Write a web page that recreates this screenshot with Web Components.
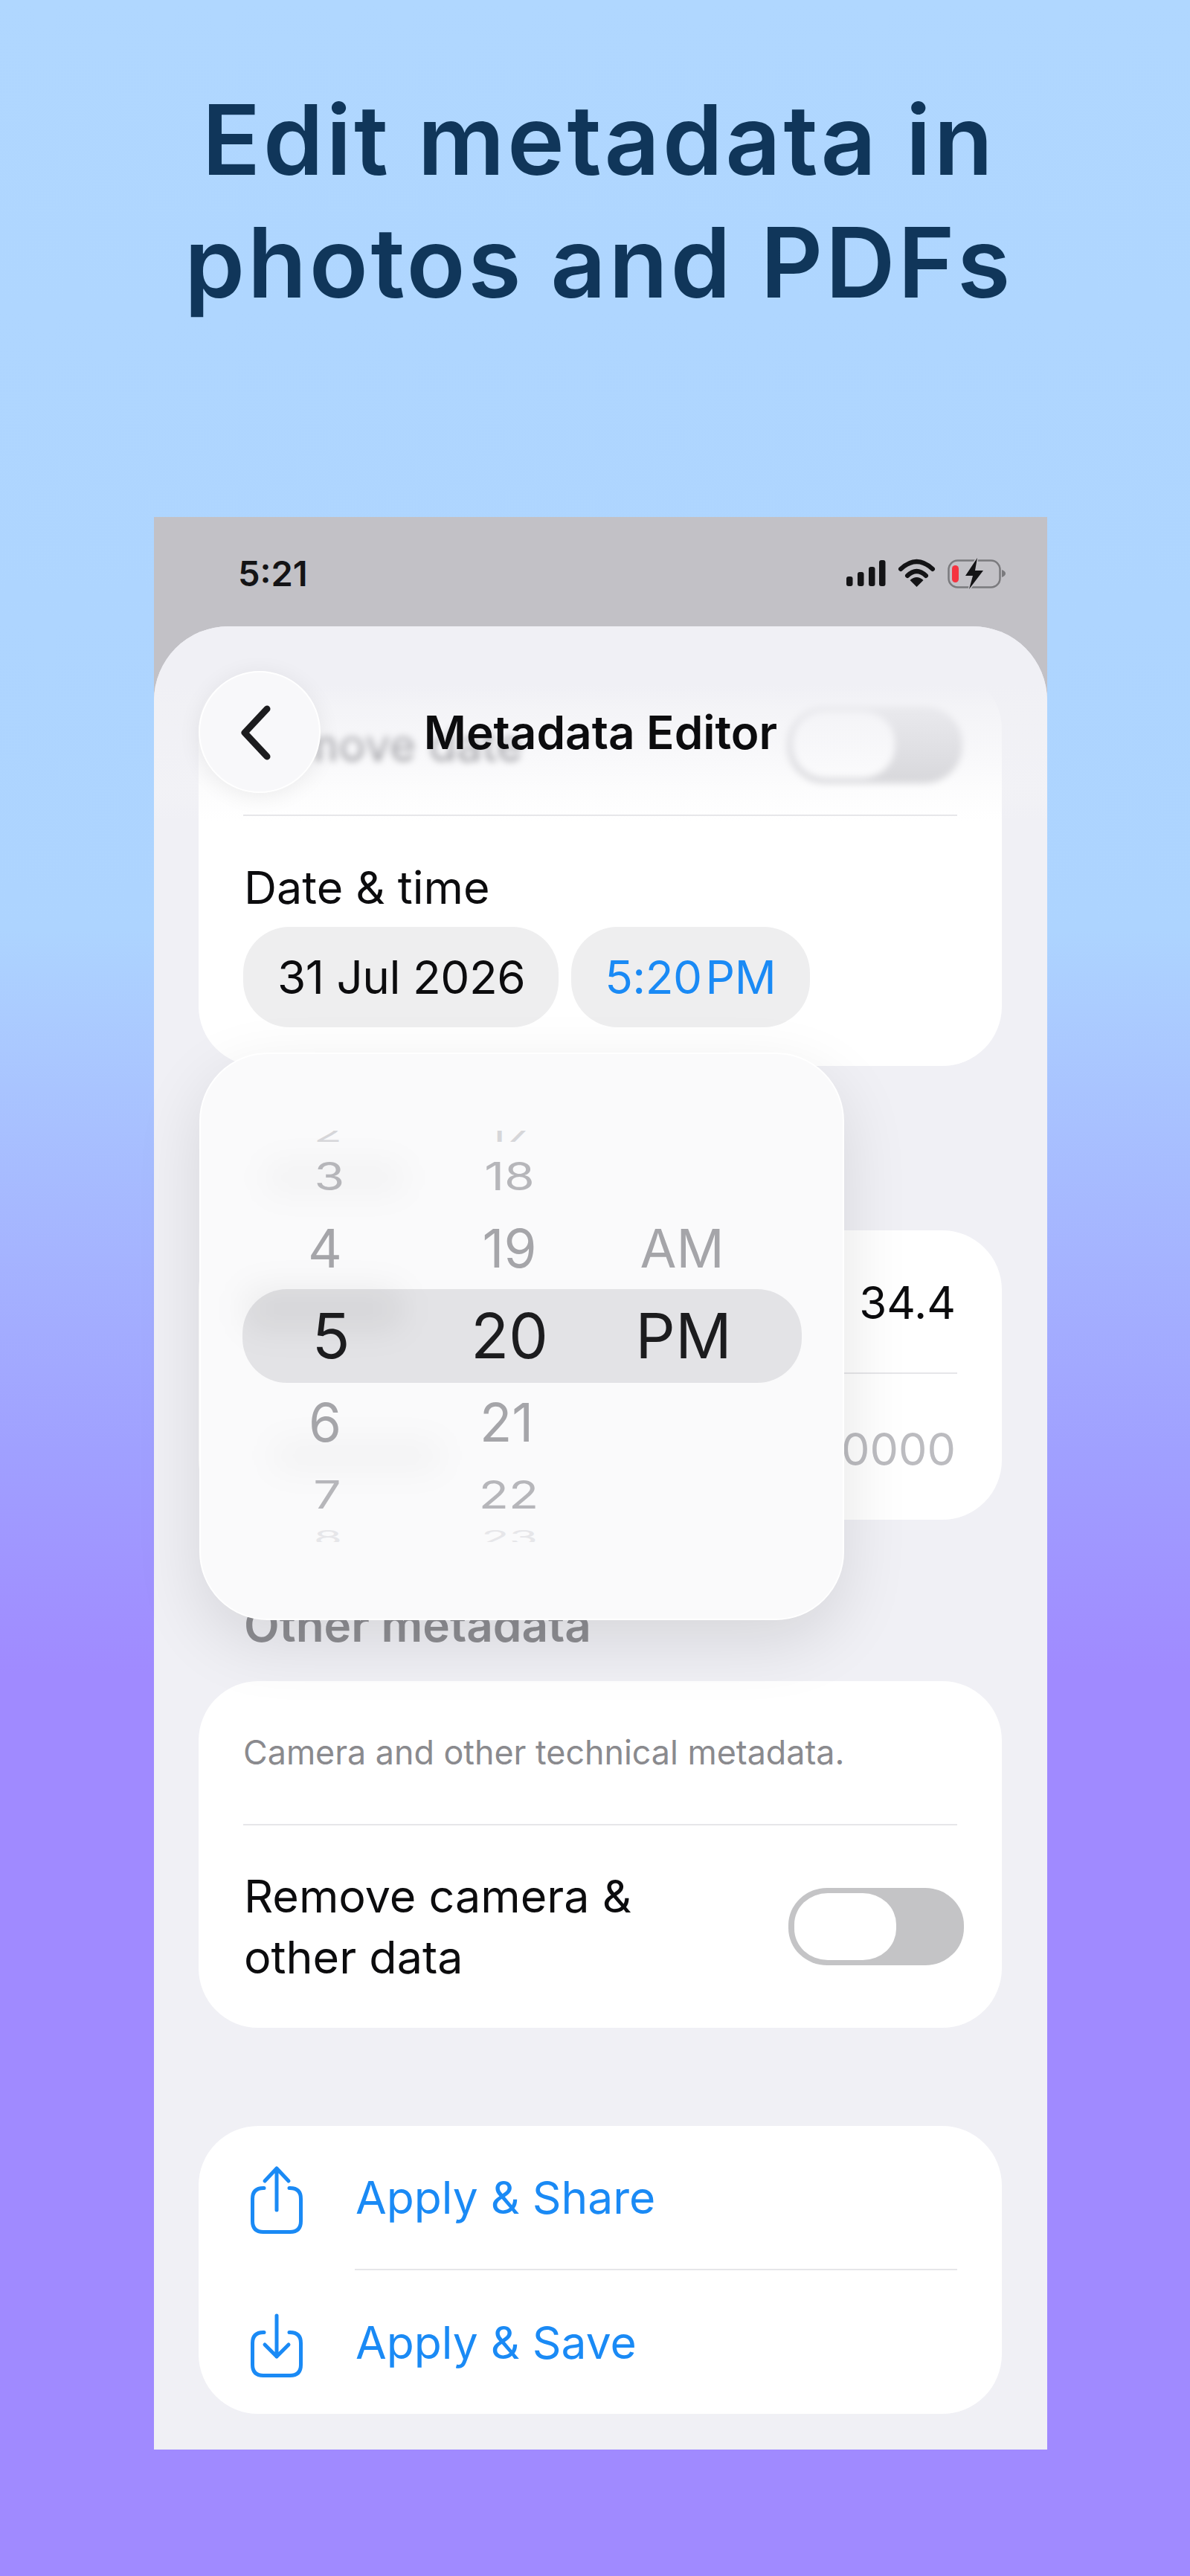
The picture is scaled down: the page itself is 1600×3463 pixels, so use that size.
<!DOCTYPE html>
<html>
<head>
<meta charset="utf-8">
<title>Metadata Editor</title>
<style>
  html, body { margin: 0; padding: 0; }
  body {
    width: 1600px; height: 3463px; overflow: hidden;
    font-family: Inter, "Noto Sans", sans-serif;
    background: linear-gradient(180deg, #b0d7ff 0, #add4ff 1250px, #a0a0ff 1950px, #a08aff 2250px, #a08aff 100%);
  }
</style>
</head>
<body>
<promo-headline>Edit metadata in<br>photos and PDFs</promo-headline>

<phone-shot>
  <status-strip slot="status" time="5:21"></status-strip>

  <settings-card style="--top:58px">
    <plain-row height="195" blurred>
      <span style="color:#44444a">Remove date</span>
      <toggle-switch slot="end" soft></toggle-switch>
    </plain-row>
    <card-line></card-line>
    <date-row label="Date &amp; time" date="31 Jul 2026" time="5:20 PM"></date-row>
  </settings-card>

  <settings-card style="--top:221px">
    <plain-row height="191" style="padding-top:2px;font-size:60px"><span slot="end">34.4</span></plain-row>
    <card-line></card-line>
    <plain-row height="196" style="padding-top:5px"><span slot="end" style="color:#bcbcc0">0000</span></plain-row>
  </settings-card>

  <section-title>Other metadata</section-title>

  <settings-card>
    <note-row>Camera and other technical metadata.</note-row>
    <card-line></card-line>
    <plain-row height="272" tight>
      <span>Remove camera &amp;<br>other data</span>
      <toggle-switch slot="end"></toggle-switch>
    </plain-row>
  </settings-card>

  <settings-card style="--top:132px">
    <action-row kind="share">Apply &amp; Share</action-row>
    <card-line inset="210"></card-line>
    <action-row kind="save" style="height:193px">Apply &amp; Save</action-row>
  </settings-card>

  <sheet-header slot="header">Metadata Editor</sheet-header>
  <wheel-picker slot="popup"></wheel-picker>
</phone-shot>

<script>
// small helper, every element is the same shape: static markup in an open shadow root
function shadow(el, html) {
  el.attachShadow({ mode: 'open' }).innerHTML = html;
}

class PromoHeadline extends HTMLElement {
  constructor() {
    super();
    shadow(this, `<style>
      :host { display: block; height: 695px; box-sizing: border-box; padding: 105px 0 0 10px; text-align: center;
        font-family: Inter, sans-serif; font-weight: 600; font-size: 130px; line-height: 165px; letter-spacing: 3.5px; color: #10365a; }
    </style><slot></slot>`);
  }
}

class PhoneShot extends HTMLElement {
  constructor() {
    super();
    shadow(this, `<style>
      :host { display: block; position: relative; width: 1201px; height: 2598px; margin-left: 207px; background: #c2c1c6; }
      .sheet { position: relative; height: 2451px; box-sizing: border-box; padding: 0 61px 48px 60px; background: #f0f0f5;
        border-radius: 100px 100px 0 0; overflow: hidden; }
    </style>
    <slot name="status"></slot>
    <div class="sheet"><slot></slot><slot name="header"></slot></div>
    <slot name="popup"></slot>`);
  }
}

class StatusStrip extends HTMLElement {
  constructor() {
    super();
    shadow(this, `<style>
      :host { display: flex; justify-content: space-between; height: 147px; box-sizing: border-box;
        padding: 48px 56px 0 113px; }
      .t { font-size: 47px; font-weight: 600; line-height: 56px; color: #141416; }
      svg { display: block; }
    </style>
    <div class="t">${this.getAttribute('time')}</div>
    <svg width="214" height="56" viewBox="0 0 214 56">
      <g fill="#141416">
        <rect x="0" y="32" width="8.5" height="13" rx="3"/>
        <rect x="15" y="26" width="8.5" height="19" rx="3"/>
        <rect x="30" y="19" width="8.5" height="26" rx="3"/>
        <rect x="44" y="10" width="8.5" height="35" rx="3"/>
        <path d="M94.5 46 85.5 37Q94.5 29 103.5 37Z"/>
      </g>
      <path d="M73 22Q94.5 2 116 22M82 31Q94.5 19 107 31" fill="none" stroke="#141416" stroke-width="6" stroke-linecap="round"/>
      <rect x="137.5" y="10.5" width="69" height="36" rx="12" fill="none" stroke="#7a7a7d" stroke-width="2.5"/>
      <rect x="142" y="17" width="9" height="23" rx="4.5" fill="#f5333f"/>
      <path d="M209 23Q214 25 214 28T209 33Z" fill="#7a7a7d"/>
      <path d="M176 7 160 31H170L165 49 184 24H173Z" fill="#141416" stroke="#c2c1c6" stroke-width="3" paint-order="stroke"/>
    </svg>`);
  }
}

class SheetHeader extends HTMLElement {
  constructor() {
    super();
    shadow(this, `<style>
      :host { position: absolute; left: 0; right: 0; top: 0; height: 270px; display: block;
        background: linear-gradient(180deg, #f0f0f5 0, #f0f0f5 80px, rgba(241,241,245,.82) 108px, rgba(242,242,246,.55) 170px, rgba(246,246,248,.3) 220px, rgba(248,248,250,0) 262px); }
      .title { position: absolute; left: 0; right: 0; top: 107px; text-align: center; font-size: 62px; font-weight: 600;
        line-height: 72px; color: #0c0c0e; }
      .back { position: absolute; left: 60px; top: 60px; width: 164px; height: 164px; box-sizing: border-box; border-radius: 50%;
        background: #f8f8fa; border: 2px solid #fff; box-shadow: 0 4px 30px rgba(0,0,0,.07);
        display: flex; align-items: center; justify-content: center; }
    </style>
    <div class="back">
      <svg width="60" height="90" viewBox="0 0 60 90"><path d="M40 14 10 46 40 78" fill="none" stroke="#1c1c1e" stroke-width="9" stroke-linecap="round" stroke-linejoin="round"/></svg>
    </div>
    <div class="title"><slot></slot></div>`);
  }
}

class SettingsCard extends HTMLElement {
  constructor() {
    super();
    shadow(this, `<style>
      :host { display: block; margin-top: var(--top, 0); background: #fff; border-radius: 80px; overflow: hidden; }
    </style><slot></slot>`);
  }
}

class CardLine extends HTMLElement {
  constructor() {
    super();
    var inset = this.getAttribute('inset') || 60;
    shadow(this, `<style>
      :host { display: block; height: 2px; margin: 0 60px 0 ${inset}px; background: #e6e6e9; }
    </style>`);
  }
}

class PlainRow extends HTMLElement {
  constructor() {
    super();
    shadow(this, `<style>
      :host { display: flex; align-items: center; justify-content: space-between; box-sizing: border-box;
        height: ${this.getAttribute('height')}px; padding: 0 62px 0 61px; font-size: 61px; line-height: 82px; color: #0c0c0e; }
      :host([blurred]) { filter: blur(5px); padding-top: 6px; padding-right: 53px; }
      :host([tight]) { padding-right: 51px; }
    </style><div><slot></slot></div><slot name="end"></slot>`);
  }
}

class ToggleSwitch extends HTMLElement {
  constructor() {
    super();
    shadow(this, `<style>
      :host { display: block; width: 236px; height: 104px; border-radius: 52px / 50px; background: #c4c4c6; box-sizing: border-box; padding: 7px 0 7px 8px; }
      :host([soft]) { background: #c8c8cc; }
      i { display: block; width: 137px; height: 90px; border-radius: 45px / 42px; background: #fff; }
    </style><i></i>`);
  }
}

class DateRow extends HTMLElement {
  constructor() {
    super();
    shadow(this, `<style>
      :host { display: block; height: 336px; box-sizing: border-box; padding: 60px 0 0 60px; }
      .l { font-size: 61px; line-height: 72px; color: #0c0c0e; padding-left: 1px; margin-bottom: 17px; }
      .pills { display: flex; gap: 17px; }
      .p { height: 135px; border-radius: 62px; background: #eeeeef; padding: 0 45px 0 46px; display: flex; align-items: center;
        font-size: 62px; letter-spacing: -.5px; color: #0c0c0e; }
      .p.b { color: #1a8af5; word-spacing: -12px; padding: 0 46px 0 45px; }
    </style>
    <div class="l">${this.getAttribute('label').replace('&', '&amp;')}</div>
    <div class="pills"><div class="p">${this.getAttribute('date')}</div><div class="p b">${this.getAttribute('time')}</div></div>`);
  }
}

class SectionTitle extends HTMLElement {
  constructor() {
    super();
    shadow(this, `<style>
      :host { display: block; margin: 106px 0 39px; padding-left: 61px; font-size: 62px; font-weight: 600; line-height: 72px; color: #8e8e93; }
    </style><slot></slot>`);
  }
}

class NoteRow extends HTMLElement {
  constructor() {
    super();
    shadow(this, `<style>
      :host { display: block; height: 192px; box-sizing: border-box; padding: 68px 0 0 60px; font-size: 44.8px; line-height: 56px; color: #8a8a8e; }
    </style><slot></slot>`);
  }
}

const ACTION_ICONS = {
  share: 'M23 37.5H22Q7.5 37.5 7.5 52V82Q7.5 96.5 22 96.5H58Q72.5 96.5 72.5 82V52Q72.5 37.5 58 37.5H57M40 67V11M24 28 40 11 56 28',
  save: 'M23 36.5H22Q7.5 36.5 7.5 51V80Q7.5 94.5 22 94.5H58Q72.5 94.5 72.5 80V51Q72.5 36.5 58 36.5H57M40 14V69M24 53 40 69 56 53'
};

class ActionRow extends HTMLElement {
  constructor() {
    super();
    shadow(this, `<style>
      :host { display: flex; align-items: center; gap: 66px; height: 192px; padding-left: 65px; font-size: 60.5px; color: #1a8af5; }
      svg { flex: none; display: block; }
    </style>
    <svg width="80" height="100" viewBox="0 0 80 100"><path d="${ACTION_ICONS[this.getAttribute('kind')]}" fill="none" stroke="#1a8af5" stroke-width="5" stroke-linecap="round" stroke-linejoin="round"/></svg>
    <div><slot></slot></div>`);
  }
}

// rows: [text, font size, squash, colour, x nudge]
const WHEEL = [
  { w: 230, rows: [['2', 62, .5, '#d6d6d9', 0], ['3', 66, .78, '#b6b6ba', 2], ['4', 71, 1, '#a5a5a9', -4], ['5', 84, 1, '#1c1c1e', 4], ['6', 71, 1, '#a5a5a9', -4], ['7', 66, .78, '#b6b6ba', -1], ['8', 62, .42, '#e6e6e9', 0]] },
  { w: 258, rows: [['17', 62, .5, '#d6d6d9', 0], ['18', 66, .78, '#b6b6ba', 0], ['19', 71, 1, '#a5a5a9', 0], ['20', 84, 1, '#1c1c1e', 0], ['21', 71, 1, '#a5a5a9', -4], ['22', 66, .78, '#b6b6ba', -1], ['23', 62, .42, '#e6e6e9', 0]] },
  { w: 210, rows: [['', 62, 1, '', 0], ['', 66, 1, '', 0], ['AM', 71, 1, '#a5a5a9', -2], ['PM', 84, 1, '#1c1c1e', 0], ['', 71, 1, '', 0], ['', 66, 1, '', 0], ['', 62, 1, '', 0]] }
];

class WheelPicker extends HTMLElement {
  constructor() {
    super();
    var cols = WHEEL.map(function (col) {
      var cells = col.rows.map(function (r, i) {
        // first and last rows sit half way round the wheel, so they get cut by the window
        var clip = i == 0 ? 'align-items:flex-end;' : i == 6 ? 'align-items:flex-start;' : '';
        var origin = i == 0 ? 'center bottom' : i == 6 ? 'center top' : 'center';
        var dy = i == 0 ? -10 : i == 6 ? 11 : 0;
        return `<div class="cell" style="${clip}"><span style="font-size:${r[1]}px;color:${r[3]};transform:translate(${r[4]}px,${dy}px) scaleY(${r[2]});transform-origin:${origin}">${r[0]}</span></div>`;
      }).join('');
      return `<div class="col" style="width:${col.w}px">${cells}</div>`;
    }).join('');
    shadow(this, `<style>
      :host { position: absolute; left: 61px; top: 720px; width: 867px; height: 763px; box-sizing: border-box; display: block;
        background: #fafafb; border: 2px solid #fff; border-radius: 92px;
        box-shadow: 0 30px 90px rgba(0,0,0,.11); padding: 103px 0 0 56px; overflow: hidden; }
      .bar { position: absolute; left: 56px; top: 316px; width: 752px; height: 126px; border-radius: 60px; background: #e3e3e6; }
      .blob { position: absolute; background: rgba(0,0,0,.03); filter: blur(22px); border-radius: 20px; }
      .cols { position: relative; display: flex; }
      .col { display: grid; grid-template-rows: 29px 64px 130px 106px 126px 68px 30px; }
      .cell { display: flex; justify-content: center; align-items: center; overflow: hidden; }
      .cell span { display: block; line-height: 1; }
    </style>
    <div class="bar"></div>
    <div class="blob" style="left:85px;top:145px;width:190px;height:42px"></div>
    <div class="blob" style="left:60px;top:315px;width:210px;height:55px;background:rgba(0,0,0,.06)"></div>
    <div class="blob" style="left:95px;top:520px;width:230px;height:40px"></div>
    <div class="cols">${cols}</div>`);
  }
}

customElements.define('promo-headline', PromoHeadline);
customElements.define('phone-shot', PhoneShot);
customElements.define('status-strip', StatusStrip);
customElements.define('sheet-header', SheetHeader);
customElements.define('settings-card', SettingsCard);
customElements.define('card-line', CardLine);
customElements.define('plain-row', PlainRow);
customElements.define('toggle-switch', ToggleSwitch);
customElements.define('date-row', DateRow);
customElements.define('section-title', SectionTitle);
customElements.define('note-row', NoteRow);
customElements.define('action-row', ActionRow);
customElements.define('wheel-picker', WheelPicker);
</script>
</body>
</html>
